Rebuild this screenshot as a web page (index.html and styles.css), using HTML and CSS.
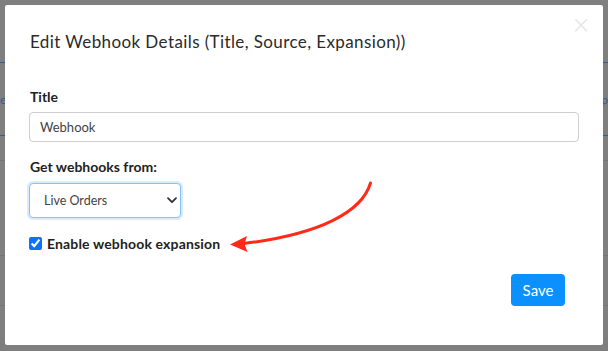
FILE: index.html
```html
<!DOCTYPE html>
<html lang="en">
<head>
<meta charset="utf-8">
<title>Edit Webhook Details</title>
<link rel="stylesheet" href="styles.css">
</head>
<body>
<div class="page">
  <div class="page-row page-head"></div>
  <div class="page-row page-links"><span class="link-left">e</span><span class="link-right">p</span></div>
  <div class="page-row page-sub"></div>
  <div class="page-row page-item"></div>
  <div class="page-row page-item2"></div>
</div>
<div class="backdrop"></div>
<div class="modal">
  <div class="modal-header">
    <h4 class="modal-title">Edit Webhook Details (Title, Source, Expansion))</h4>
    <button class="close" type="button">&times;</button>
  </div>
  <div class="modal-body">
    <label class="label">Title</label>
    <input class="input" type="text" value="Webhook">
    <label class="label label-gap">Get webhooks from:</label>
    <div class="select-wrap">
      <select class="select"><option>Live Orders</option></select>
      <svg class="chevron" width="10" height="7" viewBox="0 0 10 7"><path d="M1 1.2 L5 5.2 L9 1.2" fill="none" stroke="#333" stroke-width="1.8" stroke-linecap="round" stroke-linejoin="round"/></svg>
    </div>
    <label class="check"><input type="checkbox" checked><span>Enable webhook expansion</span></label>
  </div>
  <div class="modal-footer">
    <button class="btn" type="button">Save</button>
  </div>
</div>
<svg class="annotation" width="608" height="351" viewBox="0 0 608 351">
  <path d="M370.5 183 C 362 212, 320 234, 244 243.5" fill="none" stroke="#ff2a17" stroke-width="3" stroke-linecap="round"/>
  <path d="M230 244.5 L247 236 L244.5 244 L247.5 252 Z" fill="#ff2a17"/>
</svg>
</body>
</html>
```
FILE: styles.css
```css
html, body {
  margin: 0;
  padding: 0;
}
body {
  width: 608px;
  height: 351px;
  overflow: hidden;
  position: relative;
  background: #7f7f7f;
  font-family: "Lato", "Open Sans", sans-serif;
}
.page {
  display: flex;
  flex-direction: column;
}
.page-row {
  box-sizing: border-box;
}
.page-head {
  height: 63px;
  border-bottom: 1px solid #2f5f8f;
}
.page-links {
  height: 73px;
  border-bottom: 1px solid #2f5f8f;
  display: flex;
  justify-content: space-between;
  align-items: center;
  font-size: 12px;
  color: #2f5f8f;
}
.link-left {
  margin-left: 0;
}
.link-right {
  margin-right: 0;
}
.page-sub {
  height: 25px;
  border-bottom: 1px solid #747474;
}
.page-item {
  height: 95px;
  border-bottom: 1px solid #747474;
}
.page-item2 {
  height: 50px;
  border-bottom: 1px solid #747474;
}
.backdrop {
  position: absolute;
  inset: 0;
}
.modal {
  position: absolute;
  left: 5px;
  top: 5px;
  width: 598px;
  height: 340px;
  background: #fff;
  border-radius: 2px;
  display: flex;
  flex-direction: column;
  box-sizing: border-box;
}
.modal-header {
  position: relative;
  padding: 27px 24px 0 25px;
}
.modal-title {
  margin: 0;
  font-size: 17px;
  line-height: 20px;
  font-weight: 400;
  letter-spacing: 0.4px;
  color: #2b2b2b;
}
.close {
  position: absolute;
  right: 12px;
  top: 8px;
  border: 0;
  background: none;
  padding: 0;
  font-size: 24px;
  line-height: 24px;
  color: #e4e4e4;
  font-family: "DejaVu Sans", sans-serif;
  font-weight: 300;
}
.modal-body {
  padding: 36px 24px 0 24px;
  display: flex;
  flex-direction: column;
  align-items: flex-start;
}
.label {
  font-size: 14px;
  line-height: 17px;
  font-weight: 700;
  color: #222;
  margin-left: 1px;
}
.label-gap {
  margin-top: 16px;
}
.input {
  box-sizing: border-box;
  margin-top: 7px;
  width: 550px;
  height: 30px;
  border: 1px solid #cfcfcf;
  border-radius: 4px;
  padding: 0 10px;
  font-family: inherit;
  font-size: 13px;
  color: #444;
  outline: none;
}
.select-wrap {
  position: relative;
  margin-top: 8px;
}
.select {
  appearance: none;
  -webkit-appearance: none;
  box-sizing: border-box;
  width: 152px;
  height: 35px;
  border: 1px solid #86c1ff;
  border-radius: 4px;
  box-shadow: 0 0 0 2px #d9ebff;
  background: #fff;
  padding: 0 14px;
  font-family: inherit;
  font-size: 12.5px;
  color: #444;
  outline: none;
}
.chevron {
  position: absolute;
  right: 4px;
  top: 14px;
}
.check {
  display: flex;
  align-items: center;
  margin-top: 17px;
  font-size: 14px;
  font-weight: 700;
  letter-spacing: 0.15px;
  color: #222;
}
.check input {
  margin: 0 5px 0 0;
  width: 13px;
  height: 13px;
  accent-color: #0a72ff;
}
.modal-footer {
  margin-top: auto;
  padding: 0 38px 39px 0;
  display: flex;
  justify-content: flex-end;
}
.btn {
  width: 54px;
  height: 32px;
  border: 0;
  border-radius: 4px;
  background: #0a90ff;
  color: #fff;
  font-family: inherit;
  font-size: 15px;
  padding: 0;
}
.annotation {
  position: absolute;
  left: 0;
  top: 0;
  pointer-events: none;
}
```
